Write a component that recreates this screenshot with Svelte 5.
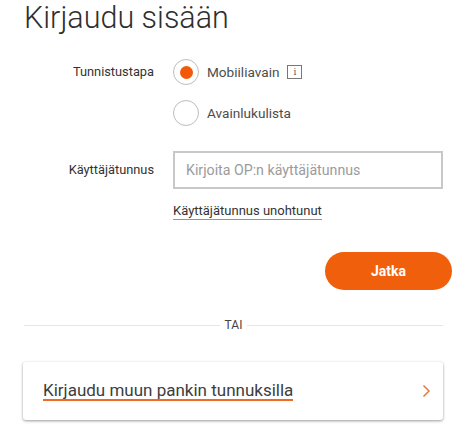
<script>
    let method = $state("mobile")
    let username = $state("")
</script>

<main class="page">
    <h1>Kirjaudu sisään</h1>

    <div class="row methods">
        <span class="label">Tunnistustapa</span>
        <div class="options">
            <button class="option" onclick={() => (method = "mobile")}>
                <span class="radio" class:on={method === "mobile"}></span>
                <span>Mobiiliavain</span>
                <span class="info">i</span>
            </button>
            <button class="option" onclick={() => (method = "list")}>
                <span class="radio" class:on={method === "list"}></span>
                <span>Avainlukulista</span>
            </button>
        </div>
    </div>

    <div class="row user">
        <label class="label" for="username">Käyttäjätunnus</label>
        <div class="field">
            <input id="username" bind:value={username} placeholder="Kirjoita OP:n käyttäjätunnus" />
            <a class="forgot" href="#forgot">Käyttäjätunnus unohtunut</a>
        </div>
    </div>

    <div class="actions">
        <button class="next">Jatka</button>
    </div>

    <div class="divider"><span>TAI</span></div>

    <a class="card" href="#other">
        <span class="card-text">Kirjaudu muun pankin tunnuksilla</span>
        <svg width="9" height="14" viewBox="0 0 9 14">
            <path d="M1.5 1.5 L7 7 L1.5 12.5" fill="none" stroke="#e9793a" stroke-width="1.5" />
        </svg>
    </a>
</main>

<style>
    :global(body) {
        background: #fff;
        font-family: Roboto, "Noto Sans", sans-serif;
        color: #3a3a3a;
    }

    .page {
        height: 431px;
        overflow: hidden;
        box-sizing: border-box;
        padding: 0 31px 0 24px;
    }

    h1 {
        margin: 0;
        font-size: 30.5px;
        line-height: 36px;
        font-weight: 300;
        color: #2e2e2e;
    }

    .row {
        display: flex;
        align-items: flex-start;
    }

    .label {
        width: 130px;
        margin-right: 19px;
        text-align: right;
        font-size: 12.8px;
        line-height: 20px;
        color: #333;
    }

    .methods {
        margin-top: 23px;
    }

    .methods .label {
        margin-top: 3px;
    }

    .options {
        display: flex;
        flex-direction: column;
        gap: 15px;
    }

    .option {
        display: flex;
        align-items: center;
        gap: 8px;
        height: 26px;
        padding: 0;
        border: 0;
        background: none;
        font: inherit;
        font-size: 13.6px;
        color: #4d4d4d;
    }

    .radio {
        box-sizing: border-box;
        display: flex;
        align-items: center;
        justify-content: center;
        width: 26px;
        height: 26px;
        border: 1.5px solid #bdbdbd;
        border-radius: 50%;
    }

    .radio.on::after {
        content: "";
        width: 13px;
        height: 13px;
        border-radius: 50%;
        background: #f05a0a;
    }

    .info {
        box-sizing: border-box;
        width: 15px;
        height: 14px;
        border: 1px solid #777;
        font-family: "DejaVu Serif", serif;
        font-size: 9px;
        line-height: 12px;
        text-align: center;
        color: #555;
    }

    .user {
        margin-top: 25px;
    }

    .user .label {
        margin-top: 9px;
    }

    .field {
        flex: 1;
    }

    input {
        display: block;
        box-sizing: border-box;
        width: 270px;
        height: 38px;
        padding: 0 11px;
        border: 2px solid #c8c8c8;
        border-radius: 0;
        outline: none;
        font: inherit;
        font-size: 14.2px;
        color: #333;
    }

    input::placeholder {
        color: #9b9b9b;
        opacity: 1;
    }

    .forgot {
        display: inline-block;
        margin-top: 13px;
        border-bottom: 1px solid #ee7a38;
        font-size: 13px;
        line-height: 17px;
        color: #333;
        text-decoration: none;
    }

    .actions {
        display: flex;
        justify-content: flex-end;
        margin: 32px -9px 0 0;
    }

    .next {
        width: 127px;
        height: 38px;
        border: 0;
        border-radius: 19px;
        background: #f05f0c;
        font: inherit;
        font-size: 14px;
        font-weight: 700;
        color: #fff;
    }

    .divider {
        display: flex;
        align-items: center;
        gap: 5px;
        margin: 27px 0 0;
        font-size: 12px;
        line-height: 16px;
        color: #444;
    }

    .divider::before,
    .divider::after {
        content: "";
        flex: 1;
        height: 1px;
        background: #e6e6e6;
    }

    .card {
        box-sizing: border-box;
        display: flex;
        align-items: center;
        justify-content: space-between;
        height: 58px;
        margin: 29px 0 0 -1px;
        padding: 0 12px 0 20px;
        border-radius: 3px;
        box-shadow: 0 1px 3px rgba(0, 0, 0, 0.4);
        text-decoration: none;
    }

    .card-text {
        border-bottom: 2px solid #ee6a25;
        font-size: 17px;
        line-height: 17px;
        color: #3d3d3d;
    }
</style>
